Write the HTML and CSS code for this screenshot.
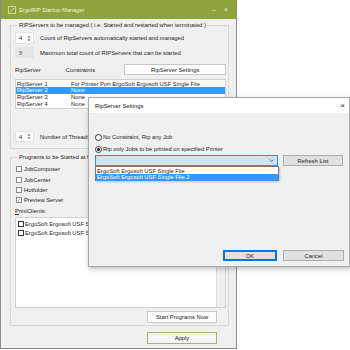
FILE: index.html
```html
<!DOCTYPE html>
<html lang="en">
<head>
  <meta charset="UTF-8" />
  <title>ErgoRIP Startup Manager</title>
  <link rel="stylesheet" href="styles.css">
</head>
<body>
  <div class="win">
    <div class="titlebar">
      <svg class="appicon" width="8" height="8" viewBox="0 0 8 8">
        <rect x="0.5" y="0.5" width="7" height="7" fill="none" stroke="#cbd89f" stroke-width="1"/>
        <path d="M2 6 L6 2" stroke="#cbd89f" stroke-width="1"/>
      </svg>
      <span class="title">ErgoRIP Startup Manager</span>
      <span class="ctl">&ndash;</span>
      <span class="ctl">&times;</span>
    </div>

    <div class="content">
      <fieldset class="group g1">
        <legend>RIPServers to be managed ( i.e. Started and restarted when terminated )</legend>
        <div class="row r1">
          <div class="spin"><span>4</span>
            <svg width="4" height="7" viewBox="0 0 4 7"><path d="M0.5 2.5 L2 1 L3.5 2.5 Z M0.5 4.5 L2 6 L3.5 4.5 Z" fill="#444"/></svg>
          </div>
          <span class="lbl">Count of RipServers automatically started and managed</span>
        </div>
        <div class="row r2">
          <div class="spin off"><span>8</span></div>
          <span class="lbl">Maximum total count of RIPServers that can be started</span>
        </div>
        <div class="row head">
          <span class="col1">RipServer</span>
          <span class="col2">Constraints</span>
          <button class="btn white settings">RipServer Settings</button>
        </div>
        <div class="list servers">
          <div class="item"><span class="col1">RipServer 1</span><span>For Printer Port ErgoSoft Ergosoft USF Single File</span></div>
          <div class="item sel"><span class="col1">RipServer 2</span><span>None</span></div>
          <div class="item"><span class="col1">RipServer 3</span><span>None</span></div>
          <div class="item"><span class="col1">RipServer 4</span><span>None</span></div>
        </div>
        <div class="row threads">
          <div class="spin"><span>4</span>
            <svg width="4" height="7" viewBox="0 0 4 7"><path d="M0.5 2.5 L2 1 L3.5 2.5 Z M0.5 4.5 L2 6 L3.5 4.5 Z" fill="#444"/></svg>
          </div>
          <span class="lbl">Number of Threads</span>
        </div>
      </fieldset>

      <fieldset class="group g2">
        <legend>Programs to be Started at Next Startup</legend>
        <div class="check first"><span class="box"></span>JobComposer</div>
        <div class="check"><span class="box"></span>JobCenter</div>
        <div class="check"><span class="box"></span>Hotfolder</div>
        <div class="check"><span class="box on">&#10003;</span>Preview Server</div>
        <div class="check plain"><span class="u">P</span>rintClients:</div>
        <div class="list clients">
          <div class="items">
            <div class="citem"><span class="box dark"></span>ErgoSoft Ergosoft USF Single File</div>
            <div class="citem"><span class="box dark"></span>ErgoSoft Ergosoft USF Single File 2</div>
          </div>
          <div class="scroll"></div>
        </div>
        <div class="btnrow">
          <button class="btn white wide">Start Programs Now</button>
        </div>
      </fieldset>

      <div class="btnrow apply-row">
        <button class="btn apply wide">Apply</button>
      </div>
    </div>
  </div>

  <div class="dialog">
    <div class="dtitle">
      <span>RipServer Settings</span>
      <span class="close">&times;</span>
    </div>
    <div class="dbody">
      <div class="radio r-a"><span class="dot"></span>No Constraint, Rip any Job</div>
      <div class="radio r-b"><span class="dot on"></span>Rip only Jobs to be printed on specified Printer</div>
      <div class="comborow">
        <div class="combo">
          <svg class="chev" width="5" height="3" viewBox="0 0 5 3"><path d="M0.5 0.5 L2.5 2.5 L4.5 0.5" fill="none" stroke="#444" stroke-width="0.8"/></svg>
          <div class="drop">
            <div class="ditem">ErgoSoft Ergosoft USF Single File</div>
            <div class="ditem sel">ErgoSoft Ergosoft USF Single File 2</div>
          </div>
        </div>
        <button class="btn gray refresh">Refresh List</button>
      </div>
      <div class="dfoot">
        <button class="btn gray ok">OK</button>
        <button class="btn gray cancel">Cancel</button>
      </div>
    </div>
  </div>
</body>
</html>
```

FILE: styles.css
```css
* {
  box-sizing: border-box;
}
body {
  margin: 0;
  background: #fff;
  font-family: 'Liberation Sans', Arial, sans-serif;
  font-size: 5.8px;
  color: #222;
  position: relative;
  width: 350px;
  height: 350px;
  overflow: hidden;
}

/* main window */
.win {
  width: 237px;
  height: 349px;
  background: #f0f0f0;
  border: 1px solid #8c8c8c;
  border-top: 0;
}
.titlebar {
  height: 19px;
  background: #8ea53d;
  display: flex;
  align-items: center;
  padding: 0 8px 0 7px;
  color: #eef3dc;
}
.appicon {
  margin-right: 3px;
}
.title {
  flex: 1;
  font-size: 5.7px;
}
.ctl {
  margin-left: 8px;
  font-size: 7px;
  color: #e6edcd;
}
.content {
  padding: 3px 7px 0 9px;
}
.group {
  margin: 0;
  padding: 0 2px 0 4px;
  border: 1px solid #d9d9d9;
  min-width: 0;
}
.group legend {
  padding: 0 1px;
  margin-left: 3px;
  line-height: 7px;
}
.row {
  display: flex;
  align-items: center;
  height: 11px;
}
.r1 { margin-top: 3px; height: 12px; }
.r2 { margin-top: 3px; }
.spin {
  width: 19px;
  height: 100%;
  background: #fff;
  border: 1px solid #e2e2e2;
  display: flex;
  align-items: center;
  justify-content: space-between;
  padding: 0 2px 0 3px;
  margin-right: 6px;
}
.spin.off {
  background: #e4e4e4;
  border-color: #e4e4e4;
  color: #666;
}
.head {
  margin-top: 6px;
}
.col1 {
  display: inline-block;
  width: 51px;
}
.head .col2 {
  width: 59px;
}
.btn {
  font-family: inherit;
  font-size: 5.8px;
  color: #222;
  padding: 0;
  height: 11px;
  border: 1px solid #adadad;
  background: #e1e1e1;
}
.btn.white {
  background: #fdfdfd;
  border-color: #c8c8c8;
}
.settings {
  width: 102px;
}
.list {
  background: #fff;
  border: 1px solid #d0d0d0;
}
.servers {
  margin-top: 4px;
  height: 30px;
  padding-top: 0.5px;
}
.servers .item {
  height: 6.7px;
  line-height: 6.7px;
  display: flex;
  padding-left: 1px;
}
.servers .col1 {
  width: 54px;
}
.item.sel {
  background: #3399ff;
  color: #fff;
}
.threads {
  margin-top: 22px;
  margin-bottom: 6px;
}

.g2 {
  margin-top: 5px;
  padding-bottom: 2px;
}
.check {
  display: flex;
  align-items: center;
  height: 10.4px;
  padding-left: 1px;
}
.check.first {
  margin-top: 3px;
}
.check.plain {
  padding-left: 0;
}
.u {
  text-decoration: underline;
}
.box {
  width: 6px;
  height: 6px;
  border: 1px solid #8a8a8a;
  background: #fff;
  margin-right: 2px;
  font-size: 5px;
  line-height: 4px;
  text-align: center;
  color: #777;
}
.box.dark {
  border-color: #333;
}
.clients {
  margin-top: 1px;
  height: 91px;
  display: flex;
}
.clients .items {
  flex: 1;
  padding-top: 2px;
}
.citem {
  display: flex;
  align-items: center;
  height: 8.5px;
  padding-left: 2px;
}
.citem .box {
  margin-right: 1px;
}
.scroll {
  width: 9px;
  background: #f0f0f0;
  border-left: 1px solid #dcdcdc;
}
.btnrow {
  display: flex;
  justify-content: flex-end;
  margin-top: 3px;
  padding-right: 9px;
}
.wide {
  width: 70px;
  height: 12px;
}
.apply-row {
  margin-top: 6px;
  padding-right: 12px;
}
.btn.apply {
  background: #f4f4f4;
  border-color: #a7b46b;
}

/* dialog window over the main window */
.dialog {
  position: absolute;
  left: 88px;
  top: 97px;
  width: 262px;
  height: 170px;
  border: 1px solid #a9a9a9;
  background: #f0f0f0;
  box-shadow: 1px 2px 5px rgba(0, 0, 0, 0.25);
  display: flex;
  flex-direction: column;
}
.dtitle {
  height: 15px;
  background: #fff;
  display: flex;
  align-items: center;
  justify-content: space-between;
  padding: 0 4px 0 6px;
  color: #111;
}
.close {
  font-size: 8px;
  color: #222;
}
.dbody {
  flex: 1;
  display: flex;
  flex-direction: column;
  padding: 0 5px 5px 6px;
}
.radio {
  display: flex;
  align-items: center;
  height: 10px;
}
.r-a { margin-top: 19px; }
.r-b { margin-top: 2px; }
.dot {
  width: 7px;
  height: 7px;
  border: 1px solid #333;
  border-radius: 50%;
  background: #fff;
  margin-right: 1px;
  display: flex;
  align-items: center;
  justify-content: center;
}
.dot.on::after {
  content: '';
  width: 3px;
  height: 3px;
  border-radius: 50%;
  background: #111;
}
.comborow {
  display: flex;
  gap: 5px;
  margin-top: 1px;
}
.combo {
  position: relative;
  width: 183px;
  height: 11px;
  background: #cce4f7;
  border: 1px solid #3c8fd6;
}
.chev {
  position: absolute;
  right: 3px;
  top: 3px;
}
.drop {
  position: absolute;
  left: -1px;
  top: 10px;
  width: 184px;
  height: 15px;
  background: #fff;
  border: 1px solid #7a7a7a;
  padding-top: 0.5px;
  box-shadow: 1px 1px 2px rgba(0, 0, 0, 0.2);
}
.ditem {
  height: 6.5px;
  line-height: 6.5px;
  padding-left: 1px;
}
.ditem.sel {
  background: #3399ff;
  color: #fff;
}
.refresh {
  width: 60px;
}
.dfoot {
  margin-top: auto;
  display: flex;
  justify-content: flex-end;
  gap: 6px;
}
.ok {
  width: 54px;
  border: 1px solid #0078d7;
  box-shadow: inset 0 0 0 1px #0078d7;
}
.cancel {
  width: 61px;
}
```
